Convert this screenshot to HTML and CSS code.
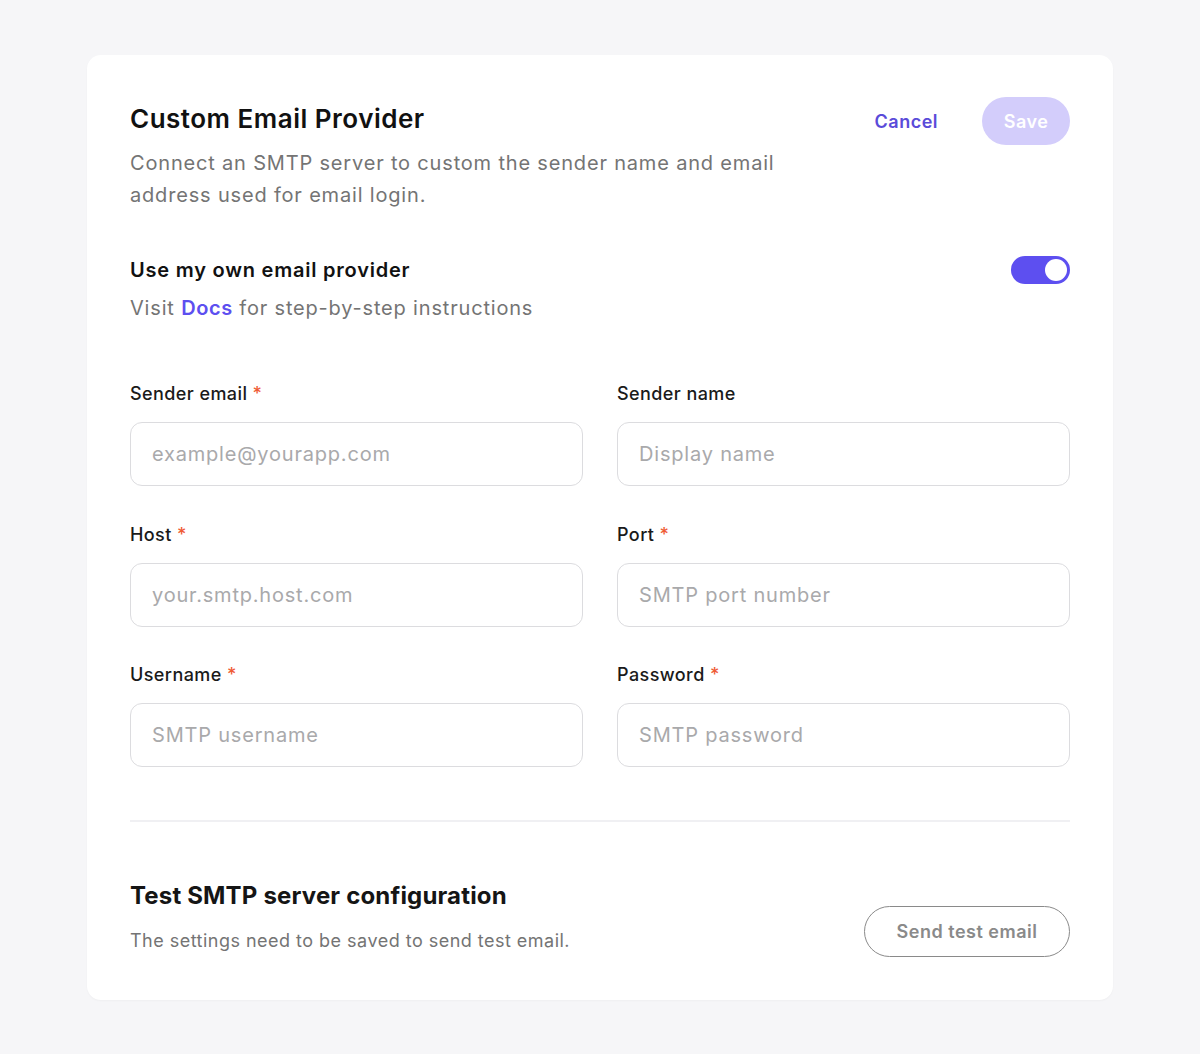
FILE: index.html
```html
<!DOCTYPE html>
<html lang="en">
<head>
<meta charset="utf-8">
<title>Custom Email Provider</title>
<link rel="stylesheet" href="styles.css">
</head>
<body>
<main class="card">
  <header class="header">
    <div class="header-text">
      <h1 class="title">Custom Email Provider</h1>
      <p class="desc">Connect an SMTP server to custom the sender name and email address used for email login.</p>
    </div>
    <div class="actions">
      <button class="btn-cancel" type="button">Cancel</button>
      <button class="btn-save" type="button">Save</button>
    </div>
  </header>

  <section class="toggle-row">
    <div>
      <h2 class="subtitle">Use my own email provider</h2>
      <p class="hint">Visit <a class="docs" href="#">Docs</a> for step-by-step instructions</p>
    </div>
    <span class="switch"><span class="knob"></span></span>
  </section>

  <section class="form">
    <div class="field">
      <label class="label">Sender email <span class="req">*</span></label>
      <input class="input" placeholder="example@yourapp.com">
    </div>
    <div class="field">
      <label class="label">Sender name</label>
      <input class="input" placeholder="Display name">
    </div>
    <div class="field">
      <label class="label">Host <span class="req">*</span></label>
      <input class="input" placeholder="your.smtp.host.com">
    </div>
    <div class="field">
      <label class="label">Port <span class="req">*</span></label>
      <input class="input" placeholder="SMTP port number">
    </div>
    <div class="field">
      <label class="label">Username <span class="req">*</span></label>
      <input class="input" placeholder="SMTP username">
    </div>
    <div class="field">
      <label class="label">Password <span class="req">*</span></label>
      <input class="input" placeholder="SMTP password">
    </div>
  </section>

  <hr class="divider">

  <section class="test-row">
    <div class="test-text">
      <h2 class="test-title">Test SMTP server configuration</h2>
      <p class="test-desc">The settings need to be saved to send test email.</p>
    </div>
    <button class="btn-test" type="button">Send test email</button>
  </section>
</main>
</body>
</html>
```

FILE: styles.css
```css
* { box-sizing: border-box; }
html, body { margin: 0; padding: 0; }
body {
  background: #f6f6f8;
  font-family: Inter, "Noto Sans", sans-serif;
  color: #151515;
  padding: 55px 87px;
}
.card {
  width: 1026px;
  background: #ffffff;
  border-radius: 14px;
  padding: 43px 43px 43px;
  box-shadow: 0 1px 2px rgba(0,0,0,0.03);
}
.header {
  display: flex;
  justify-content: space-between;
  align-items: flex-start;
}
.header-text { width: 700px; }
.title {
  margin: 0;
  font-size: 26px;
  line-height: 40px;
  font-weight: 600;
  letter-spacing: 0.5px;
  color: #111;
  padding-top: 1px;
}
.desc {
  margin: 8px 0 0;
  font-size: 20px;
  line-height: 32px;
  letter-spacing: 0.82px;
  color: #747474;
}
.actions {
  display: flex;
  align-items: center;
  gap: 44px;
  margin-top: -1px;
}
.btn-cancel {
  border: 0;
  background: none;
  padding: 0;
  font-family: inherit;
  font-size: 18px;
  font-weight: 600;
  letter-spacing: 0.5px;
  color: #5a4bd9;
}
.btn-save {
  border: 0;
  background: #d3cdfb;
  color: #fff;
  font-family: inherit;
  font-size: 18px;
  font-weight: 600;
  letter-spacing: 0.5px;
  height: 48px;
  width: 88px;
  border-radius: 24px;
}
.toggle-row {
  display: flex;
  justify-content: space-between;
  align-items: flex-start;
  margin-top: 45px;
}
.subtitle {
  margin: 0;
  font-size: 20px;
  line-height: 28px;
  font-weight: 600;
  letter-spacing: 0.78px;
  color: #111;
}
.hint {
  margin: 8px 0 0;
  font-size: 20px;
  line-height: 32px;
  letter-spacing: 0.82px;
  color: #747474;
}
.docs {
  color: #5d4ff0;
  font-weight: 600;
  letter-spacing: 0.6px;
  text-decoration: none;
}
.switch {
  width: 59px;
  height: 28px;
  border-radius: 14px;
  background: #5d4ff0;
  display: flex;
  align-items: center;
  justify-content: flex-end;
  padding: 3px;
}
.knob {
  width: 22px;
  height: 22px;
  border-radius: 50%;
  background: #fff;
}
.form {
  margin-top: 58px;
  display: grid;
  grid-template-columns: 1fr 1fr;
  column-gap: 34px;
  row-gap: 36.5px;
}
.field {
  display: flex;
  flex-direction: column;
  gap: 16px;
}
.label {
  font-size: 18px;
  line-height: 24px;
  font-weight: 500;
  letter-spacing: 0.42px;
  color: #1a1a1a;
}
.req { color: #ef5b35; }
.input {
  height: 64px;
  border: 1px solid #dcdcdf;
  border-radius: 12px;
  padding: 0 21px;
  font-family: inherit;
  font-size: 20px;
  letter-spacing: 0.8px;
  color: #222;
  background: #fff;
  outline: none;
}
.input::placeholder { color: #a9a9ab; }
.divider {
  margin: 53px 0 0;
  border: 0;
  height: 2px;
  background: #f0f0f3;
}
.test-row {
  margin-top: 58px;
  display: flex;
  justify-content: space-between;
  align-items: flex-end;
}
.test-text { padding-bottom: 4px; }
.test-title {
  margin: 0;
  font-size: 24px;
  line-height: 32px;
  font-weight: 700;
  letter-spacing: 0.17px;
  color: #151515;
}
.test-desc {
  margin: 17px 0 0;
  font-size: 18px;
  line-height: 24px;
  letter-spacing: 0.48px;
  color: #747474;
}
.btn-test {
  height: 51px;
  width: 206px;
  border: 1.5px solid #8a8a8a;
  border-radius: 26px;
  background: #fff;
  font-family: inherit;
  font-size: 18px;
  font-weight: 600;
  letter-spacing: 0.5px;
  color: #8a8a8a;
}
```
